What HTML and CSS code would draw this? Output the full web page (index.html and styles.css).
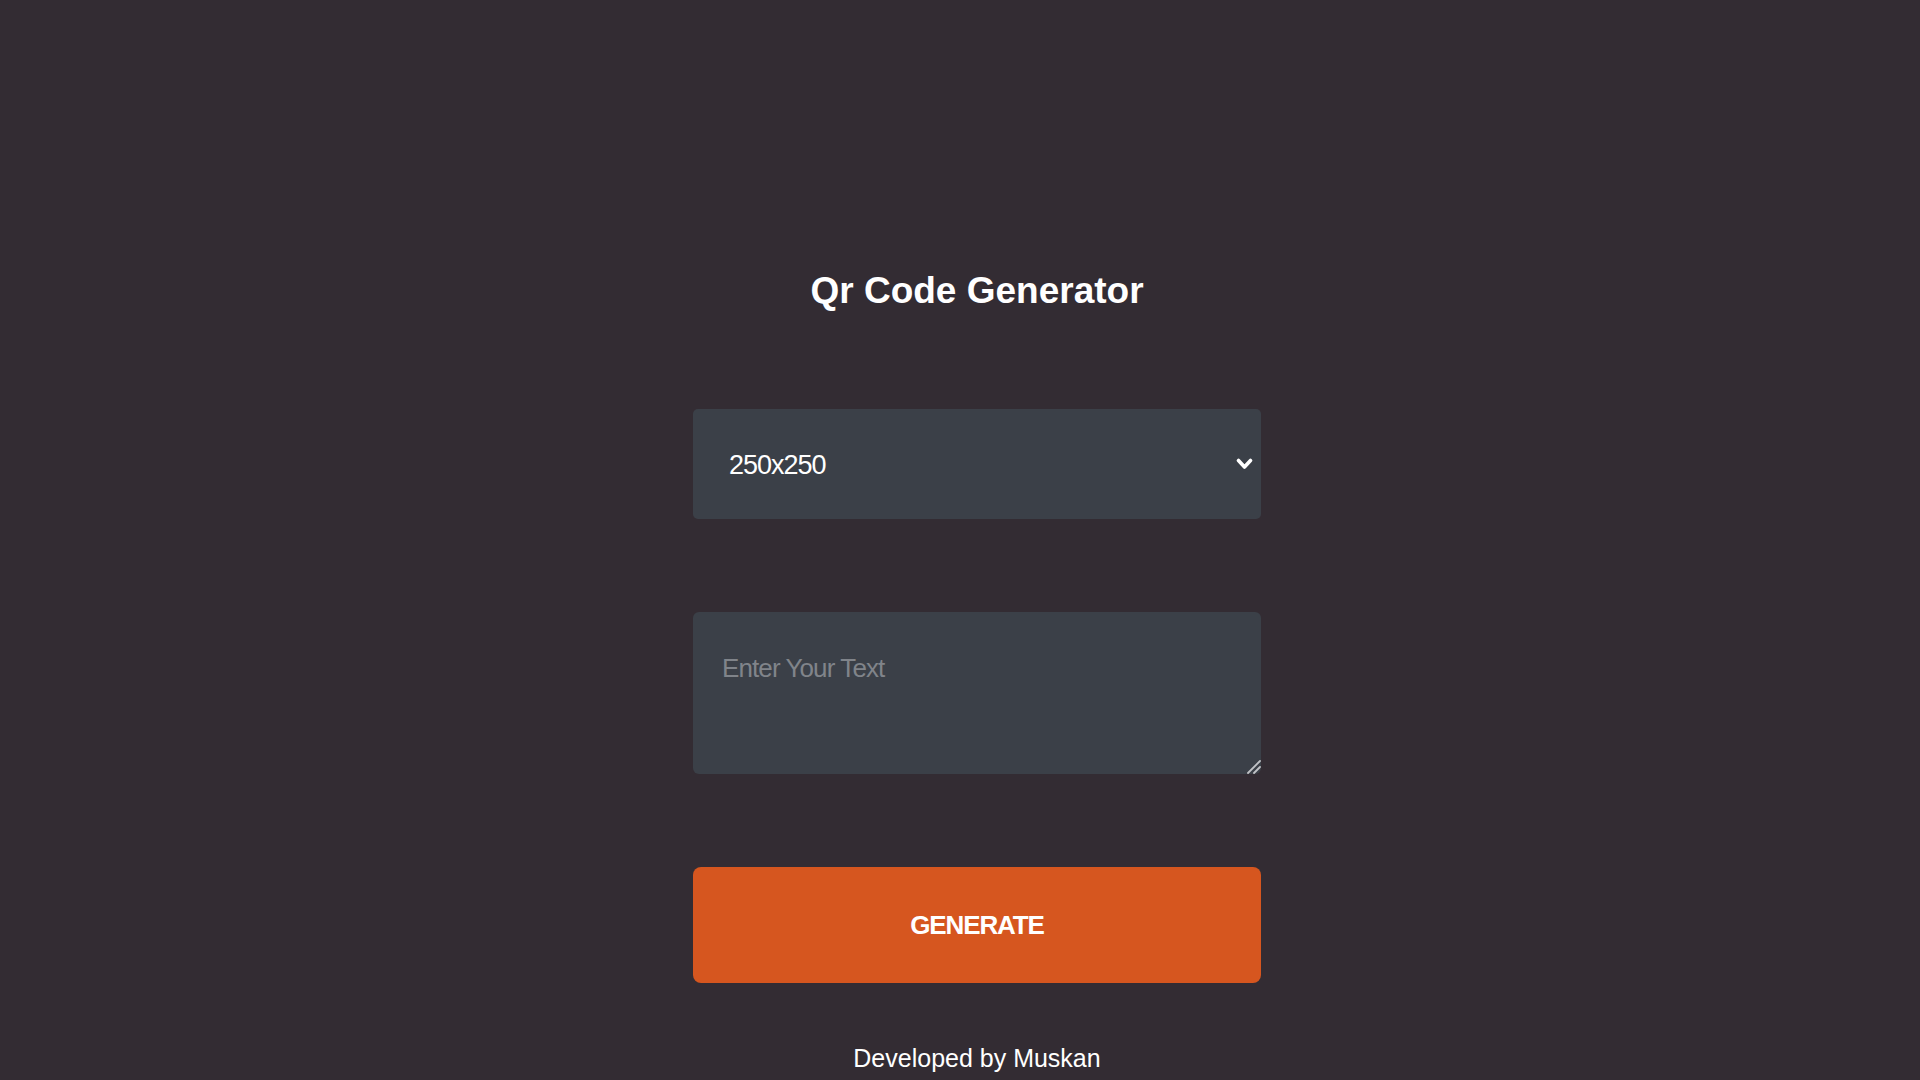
FILE: index.html
```html
<!DOCTYPE html>
<html lang="en">
<head>
<meta charset="utf-8">
<title>Qr Code Generator</title>
<link rel="stylesheet" href="styles.css">
</head>
<body>
<main class="app">
  <h1 class="title">Qr Code Generator</h1>
  <form class="form">
    <select class="size-select">
      <option>150x150</option>
      <option>200x200</option>
      <option selected>250x250</option>
      <option>300x300</option>
    </select>
    <textarea class="text-input" placeholder="Enter Your Text"></textarea>
    <button type="button" class="generate-btn">GENERATE</button>
  </form>
  <p class="footer">Developed by Muskan</p>
</main>
</body>
</html>
```
FILE: styles.css
```css
html, body {
  margin: 0;
  padding: 0;
}

body {
  background: #332c33;
  color: #ffffff;
  font-family: "Liberation Sans", Arial, sans-serif;
  min-height: 100vh;
  overflow: hidden;
}

.app {
  display: flex;
  flex-direction: column;
  align-items: center;
  padding-top: 270px;
  padding-left: 34px;
}

.title {
  margin: 0;
  font-size: 37px;
  line-height: 42px;
  font-weight: 700;
}

.form {
  display: flex;
  flex-direction: column;
  width: 568px;
  margin-top: 97px;
  gap: 93px;
}

.size-select,
.text-input,
.generate-btn {
  font-family: "Liberation Sans", Arial, sans-serif;
  box-sizing: border-box;
  width: 100%;
  border: none;
  outline: none;
  margin: 0;
}

.size-select {
  -webkit-appearance: none;
  appearance: none;
  height: 110px;
  padding: 2px 40px 0 36px;
  font-size: 27px;
  letter-spacing: -1px;
  color: #ffffff;
  background-color: #3b4048;
  border-radius: 5px;
  background-image: url("data:image/svg+xml,%3Csvg xmlns='http://www.w3.org/2000/svg' width='17' height='12' viewBox='0 0 17 12'%3E%3Cpath d='M2.5 2.5 L8.5 9 L14.5 2.5' fill='none' stroke='%23ffffff' stroke-width='3.6' stroke-linecap='round' stroke-linejoin='round'/%3E%3C/svg%3E");
  background-repeat: no-repeat;
  background-position: right 8px center;
  background-size: 17px 12px;
}

.text-input {
  color-scheme: dark;
  height: 162px;
  padding: 41px 28px 10px 29px;
  font-size: 26px;
  line-height: 30px;
  letter-spacing: -0.9px;
  color: #ffffff;
  background-color: #3b4048;
  border-radius: 6px;
  resize: vertical;
}

.text-input::placeholder {
  color: #80848a;
}

.text-input::-webkit-resizer {
  background-color: transparent;
  background-image: url("data:image/svg+xml,%3Csvg xmlns='http://www.w3.org/2000/svg' width='15' height='15' viewBox='0 0 15 15'%3E%3Cpath d='M14 2 L2 14 M14 8 L8 14' fill='none' stroke='%23c0c2c6' stroke-width='1.8' stroke-linecap='round'/%3E%3C/svg%3E");
  background-repeat: no-repeat;
  background-position: right bottom;
}

.generate-btn {
  height: 116px;
  font-size: 26px;
  letter-spacing: -1.1px;
  font-weight: 700;
  color: #ffffff;
  background-color: #d6561f;
  border-radius: 8px;
  cursor: pointer;
}

.footer {
  margin: 61px 0 0;
  font-size: 25px;
  line-height: 29px;
}
```
